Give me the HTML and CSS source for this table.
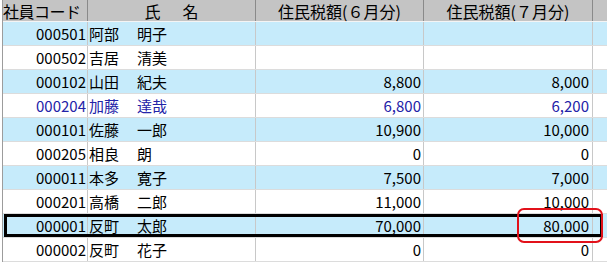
FILE: index.html
```html
<!DOCTYPE html>
<html lang="ja">
<head>
    <meta charset="UTF-8">
    <title>住民税額一覧</title>
    <link rel="stylesheet" href="styles.css">
</head>
<body>
    <div class="sheet">
        <div class="row head">
            <div class="cell c1">社員コード</div>
            <div class="cell c2"><span>氏</span><span>名</span></div>
            <div class="cell c3">住民税額(６月分)</div>
            <div class="cell c4">住民税額(７月分)</div>
            <div class="cell c5"></div>
        </div>
        <div class="row odd">
            <div class="cell c1">000501</div>
            <div class="cell c2"><span class="sei">阿部</span>明子</div>
            <div class="cell c3"></div>
            <div class="cell c4"></div>
            <div class="cell c5"></div>
        </div>
        <div class="row">
            <div class="cell c1">000502</div>
            <div class="cell c2"><span class="sei">吉居</span>清美</div>
            <div class="cell c3"></div>
            <div class="cell c4"></div>
            <div class="cell c5"></div>
        </div>
        <div class="row odd">
            <div class="cell c1">000102</div>
            <div class="cell c2"><span class="sei">山田</span>紀夫</div>
            <div class="cell c3">8,800</div>
            <div class="cell c4">8,000</div>
            <div class="cell c5"></div>
        </div>
        <div class="row changed">
            <div class="cell c1">000204</div>
            <div class="cell c2"><span class="sei">加藤</span>達哉</div>
            <div class="cell c3">6,800</div>
            <div class="cell c4">6,200</div>
            <div class="cell c5"></div>
        </div>
        <div class="row odd">
            <div class="cell c1">000101</div>
            <div class="cell c2"><span class="sei">佐藤</span>一郎</div>
            <div class="cell c3">10,900</div>
            <div class="cell c4">10,000</div>
            <div class="cell c5"></div>
        </div>
        <div class="row">
            <div class="cell c1">000205</div>
            <div class="cell c2"><span class="sei">相良</span>朗</div>
            <div class="cell c3">0</div>
            <div class="cell c4">0</div>
            <div class="cell c5"></div>
        </div>
        <div class="row odd">
            <div class="cell c1">000011</div>
            <div class="cell c2"><span class="sei">本多</span>寛子</div>
            <div class="cell c3">7,500</div>
            <div class="cell c4">7,000</div>
            <div class="cell c5"></div>
        </div>
        <div class="row">
            <div class="cell c1">000201</div>
            <div class="cell c2"><span class="sei">高橋</span>二郎</div>
            <div class="cell c3">11,000</div>
            <div class="cell c4">10,000</div>
            <div class="cell c5"></div>
        </div>
        <div class="row odd sel">
            <div class="cell c1">000001</div>
            <div class="cell c2"><span class="sei">反町</span>太郎</div>
            <div class="cell c3">70,000</div>
            <div class="cell c4">80,000</div>
            <div class="cell c5"></div>
            <div class="mark"></div>
        </div>
        <div class="row">
            <div class="cell c1">000002</div>
            <div class="cell c2"><span class="sei">反町</span>花子</div>
            <div class="cell c3">0</div>
            <div class="cell c4">0</div>
            <div class="cell c5"></div>
        </div>
    </div>
</body>
</html>
```

FILE: styles.css
```css
body {
    margin: 0;
    background-color: #fff;
    font-family: "Noto Sans CJK JP", sans-serif;
    font-size: 15px;
    color: #000;
}
.sheet {
    margin-left: 2px;
    border-left: 1px solid #9c9c9c;
}
.row {
    display: flex;
    height: 24px;
    box-sizing: border-box;
    border-bottom: 1px solid #dcdcdc;
    background-color: #fff;
    position: relative;
}
.row.odd {
    background-color: #c6ebfb;
}
.row.changed {
    color: #2323a8;
}
.cell {
    box-sizing: border-box;
    height: 100%;
    display: flex;
    align-items: center;
    justify-content: flex-end;
    border-right: 1px solid #c8c8c8;
    white-space: nowrap;
}
.c1 {
    width: 85px;
    padding-right: 1px;
}
.c2 {
    width: 168px;
    justify-content: flex-start;
    padding-left: 1px;
}
.c3 {
    width: 168px;
    padding-right: 2px;
}
.c4 {
    width: 169px;
    padding-right: 3px;
}
.c5 {
    flex: 1;
    border-right: none;
}
.sei {
    display: inline-block;
    width: 48px;
}

/* 見出し行 */
.row.head {
    height: 22px;
    background-color: #c4c4c4;
    border-bottom: 1px solid #f4f4f4;
    font-size: 16px;
}
.head .cell {
    justify-content: center;
    border-right-color: #8a8a8a;
}
.head .c1 {
    justify-content: flex-start;
    padding-left: 0;
    letter-spacing: -0.5px;
}
.head .c2 {
    justify-content: center;
    gap: 22px;
    padding-left: 0;
}
.head .c3,
.head .c4 {
    padding-right: 0;
}

/* 選択行の枠と注目マーク */
.sel::after {
    content: "";
    position: absolute;
    left: 1px;
    right: 4px;
    top: 0;
    bottom: 0;
    border: 3px solid #000;
    pointer-events: none;
}
.mark {
    position: absolute;
    left: 514px;
    top: -6px;
    width: 86px;
    height: 35px;
    box-sizing: border-box;
    border: 2px solid #e2111a;
    border-radius: 7px;
    z-index: 2;
}
```
